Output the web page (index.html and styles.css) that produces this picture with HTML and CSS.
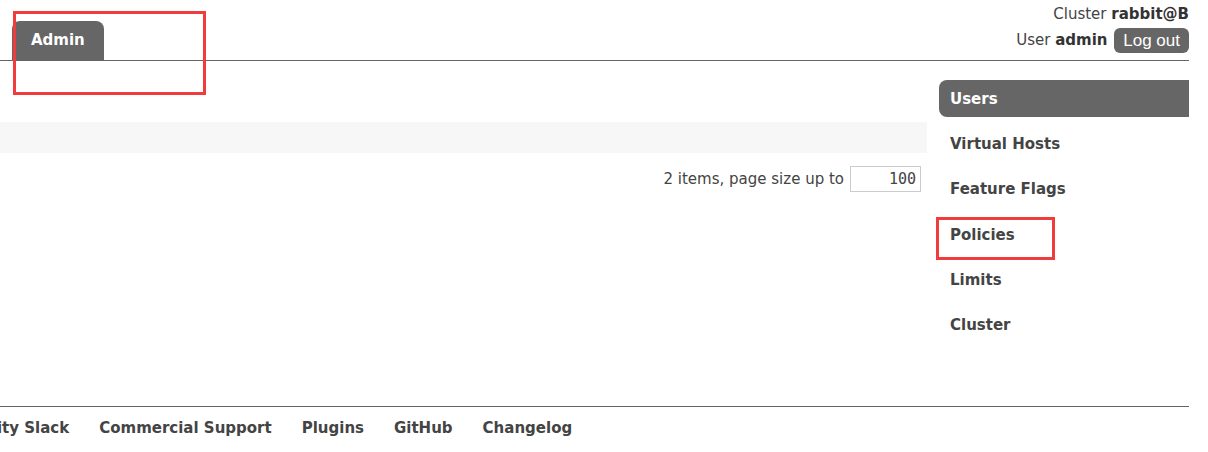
FILE: index.html
```html
<!DOCTYPE html>
<html>
<head>
<meta charset="utf-8">
<link rel="stylesheet" href="styles.css">
</head>
<body>
<div class="page">
  <header class="header">
    <nav class="tabs">
      <a class="tab active">Admin</a>
    </nav>
    <div class="login">
      <div class="login-row">Cluster <b>rabbit@B</b></div>
      <div class="login-row">User <b>admin</b> <button class="logout">Log out</button></div>
    </div>
  </header>
  <div class="content">
    <main class="main">
      <div class="strip"></div>
      <div class="pagination">
        <span>2 items, page size up to</span>
        <input class="page-size" value="100">
      </div>
    </main>
    <aside class="sidebar">
      <a class="side-item active">Users</a>
      <a class="side-item">Virtual Hosts</a>
      <a class="side-item">Feature Flags</a>
      <a class="side-item">Policies</a>
      <a class="side-item">Limits</a>
      <a class="side-item">Cluster</a>
    </aside>
  </div>
  <footer class="footer">
    <ul class="footer-links">
      <li>Community Slack</li>
      <li>Commercial Support</li>
      <li>Plugins</li>
      <li>GitHub</li>
      <li>Changelog</li>
    </ul>
  </footer>
</div>
<div class="mark mark-admin"></div>
<div class="mark mark-policies"></div>
</body>
</html>
```
FILE: styles.css
```css
html, body {
  margin: 0;
  padding: 0;
  background: #fff;
}
body {
  font-family: "DejaVu Sans", Verdana, sans-serif;
  font-size: 15px;
  color: #444;
  position: relative;
  width: 1208px;
  height: 452px;
  overflow: hidden;
}
.page {
  width: 1189px;
  overflow: hidden;
}
.header {
  display: flex;
  justify-content: space-between;
  align-items: flex-end;
  height: 60px;
  border-bottom: 1px solid #666;
}
.tabs {
  display: flex;
  padding-left: 12px;
}
.tab {
  display: block;
  width: 92px;
  box-sizing: border-box;
  height: 39px;
  padding: 10px 0 0 19px;
  background: #666;
  color: #fff;
  font-weight: bold;
  font-size: 15px;
  border-radius: 8px 8px 0 0;
}
.login {
  align-self: flex-start;
  display: flex;
  flex-direction: column;
  align-items: flex-end;
  padding-top: 4px;
}
.login-row {
  height: 24px;
  line-height: 20px;
  font-size: 15px;
  color: #444;
}
.login-row b {
  color: #333;
}
.logout {
  font-family: "Liberation Sans", Arial, sans-serif;
  font-size: 17px;
  background: #666;
  color: #fff;
  border: none;
  border-radius: 6px;
  height: 25px;
  padding: 0 9px;
  margin-left: 2px;
  vertical-align: middle;
}
.content {
  display: flex;
  gap: 12px;
  height: 345px;
}
.main {
  width: 927px;
  padding-top: 61px;
}
.strip {
  height: 31px;
  background: #f7f7f7;
}
.pagination {
  display: flex;
  justify-content: flex-end;
  align-items: center;
  gap: 6px;
  margin-top: 13px;
  padding-right: 6px;
  font-size: 15px;
  color: #444;
}
.page-size {
  width: 71px;
  height: 26px;
  box-sizing: border-box;
  border: 1px solid #ccc;
  text-align: right;
  font-family: "DejaVu Sans Mono", monospace;
  font-size: 15px;
  color: #444;
  padding: 0 4px;
}
.sidebar {
  width: 250px;
  padding-top: 19px;
  display: flex;
  flex-direction: column;
}
.side-item {
  display: block;
  height: 37px;
  line-height: 39px;
  margin-bottom: 8.2px;
  padding-left: 11px;
  font-weight: bold;
  font-size: 15px;
  color: #444;
}
.side-item.active {
  background: #666;
  color: #fff;
  border-radius: 8px 0 0 8px;
}
.footer {
  border-top: 1px solid #666;
}
.footer-links {
  list-style: none;
  margin: 0;
  padding: 0;
  display: flex;
  gap: 30px;
  margin-left: -77px;
  padding-top: 12px;
  font-weight: bold;
  font-size: 15px;
  color: #444;
}
.footer-links li {
  white-space: nowrap;
}
.mark {
  position: absolute;
  border: 3px solid #f03c3c;
  box-sizing: border-box;
}
.mark-admin {
  left: 13px;
  top: 11px;
  width: 193px;
  height: 84px;
}
.mark-policies {
  left: 936px;
  top: 217px;
  width: 119px;
  height: 43px;
}
```
